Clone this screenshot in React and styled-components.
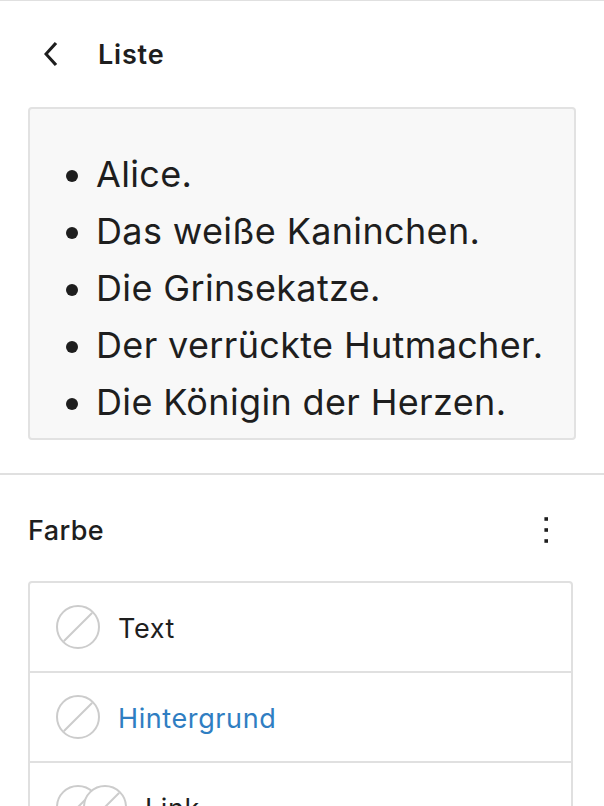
import React from "react";
import styled, { createGlobalStyle } from "styled-components";

const GlobalStyle = createGlobalStyle`
  html, body {
    margin: 0;
    padding: 0;
    background: #ffffff;
  }
  body {
    font-family: Inter, "Noto Sans", "Liberation Sans", sans-serif;
    color: #1e1e1e;
  }
`;

const Panel = styled.div`
  width: 604px;
  height: 806px;
  overflow: hidden;
  border-top: 1px solid #e0e0e0;
  box-sizing: border-box;
  background: #fff;
`;

const Header = styled.div`
  height: 106px;
  display: flex;
  align-items: center;
  padding-left: 28px;
  gap: 22px;
`;

const BackButton = styled.button`
  width: 48px;
  height: 48px;
  padding: 0;
  border: 0;
  background: none;
  display: flex;
  align-items: center;
  justify-content: center;
  color: #1e1e1e;
  cursor: pointer;
`;

const Title = styled.h2`
  margin: 0;
  font-size: 27px;
  font-weight: 600;
  letter-spacing: 0.8px;
`;

const Preview = styled.div`
  margin: 0 28px;
  height: 333px;
  box-sizing: border-box;
  border: 2px solid #e2e2e2;
  border-radius: 4px;
  background: #f8f8f8;
  overflow: hidden;
  padding-top: 37px;
`;

const PreviewList = styled.ul`
  margin: 0;
  padding-left: 66px;
  font-size: 36px;
  line-height: 57px;
  letter-spacing: 0.35px;
  color: #1e1e1e;
`;

const Divider = styled.hr`
  margin: 33px 0 0;
  border: 0;
  border-top: 2px solid #e0e0e0;
`;

const SectionHead = styled.div`
  height: 106px;
  display: flex;
  align-items: center;
  justify-content: space-between;
  padding: 4px 34px 0 28px;
  box-sizing: border-box;
`;

const SectionTitle = styled.h3`
  margin: 0;
  font-size: 27px;
  font-weight: 500;
  letter-spacing: 0.4px;
`;

const MenuButton = styled.button`
  width: 48px;
  height: 48px;
  padding: 0;
  border: 0;
  background: none;
  display: flex;
  align-items: center;
  justify-content: center;
  color: #1e1e1e;
`;

const ColorBox = styled.div`
  margin: 0 31px 0 28px;
  border: 2px solid #e0e0e0;
  border-radius: 4px;
`;

const ColorRow = styled.div`
  height: 88px;
  display: flex;
  align-items: center;
  padding-left: 26px;
  gap: 18px;
  border-top: ${(p) => (p.$first ? "0" : "2px solid #e0e0e0")};
`;

const Swatches = styled.div`
  display: flex;
  align-items: center;
`;

const Swatch = styled.span`
  position: relative;
  width: 44px;
  height: 44px;
  box-sizing: border-box;
  border: 2px solid #cccccc;
  border-radius: 50%;
  background: #fff;
  overflow: hidden;
  margin-left: ${(p) => (p.$stacked ? "-17px" : "0")};

  &::after {
    content: "";
    position: absolute;
    left: 50%;
    top: 50%;
    width: 58px;
    height: 2px;
    background: #cccccc;
    transform: translate(-50%, -50%) rotate(-45deg);
  }
`;

const RowLabel = styled.span`
  font-size: 27px;
  letter-spacing: 0.6px;
  padding-top: 2px;
  color: ${(p) => (p.$active ? "#2f7ec2" : "#1e1e1e")};
`;

const items = [
  "Alice.",
  "Das weiße Kaninchen.",
  "Die Grinsekatze.",
  "Der verrückte Hutmacher.",
  "Die Königin der Herzen.",
];

const colors = [
  { label: "Text", count: 1 },
  { label: "Hintergrund", count: 1, active: true },
  { label: "Link", count: 2 },
];

const App = () => {
  return (
    <>
      <GlobalStyle />
      <Panel>
        <Header>
          <BackButton aria-label="Zurück">
            <svg width="48" height="48" viewBox="0 0 24 24" fill="currentColor">
              <path d="M14.6 7l-1.2-1L8 12l5.4 6 1.2-1-4.6-5z" />
            </svg>
          </BackButton>
          <Title>Liste</Title>
        </Header>

        <Preview>
          <PreviewList>
            {items.map((item) => (
              <li key={item}>{item}</li>
            ))}
          </PreviewList>
        </Preview>

        <Divider />

        <SectionHead>
          <SectionTitle>Farbe</SectionTitle>
          <MenuButton aria-label="Optionen">
            <svg width="48" height="48" viewBox="0 0 24 24" fill="currentColor">
              <rect x="11.2" y="5.6" width="1.8" height="1.8" />
              <rect x="11.2" y="11.1" width="1.8" height="1.8" />
              <rect x="11.2" y="16.6" width="1.8" height="1.8" />
            </svg>
          </MenuButton>
        </SectionHead>

        <ColorBox>
          {colors.map((c, i) => (
            <ColorRow key={c.label} $first={i === 0}>
              <Swatches>
                {Array.from({ length: c.count }).map((_, j) => (
                  <Swatch key={j} $stacked={j > 0} />
                ))}
              </Swatches>
              <RowLabel $active={c.active}>{c.label}</RowLabel>
            </ColorRow>
          ))}
        </ColorBox>
      </Panel>
    </>
  );
};

export default App;
